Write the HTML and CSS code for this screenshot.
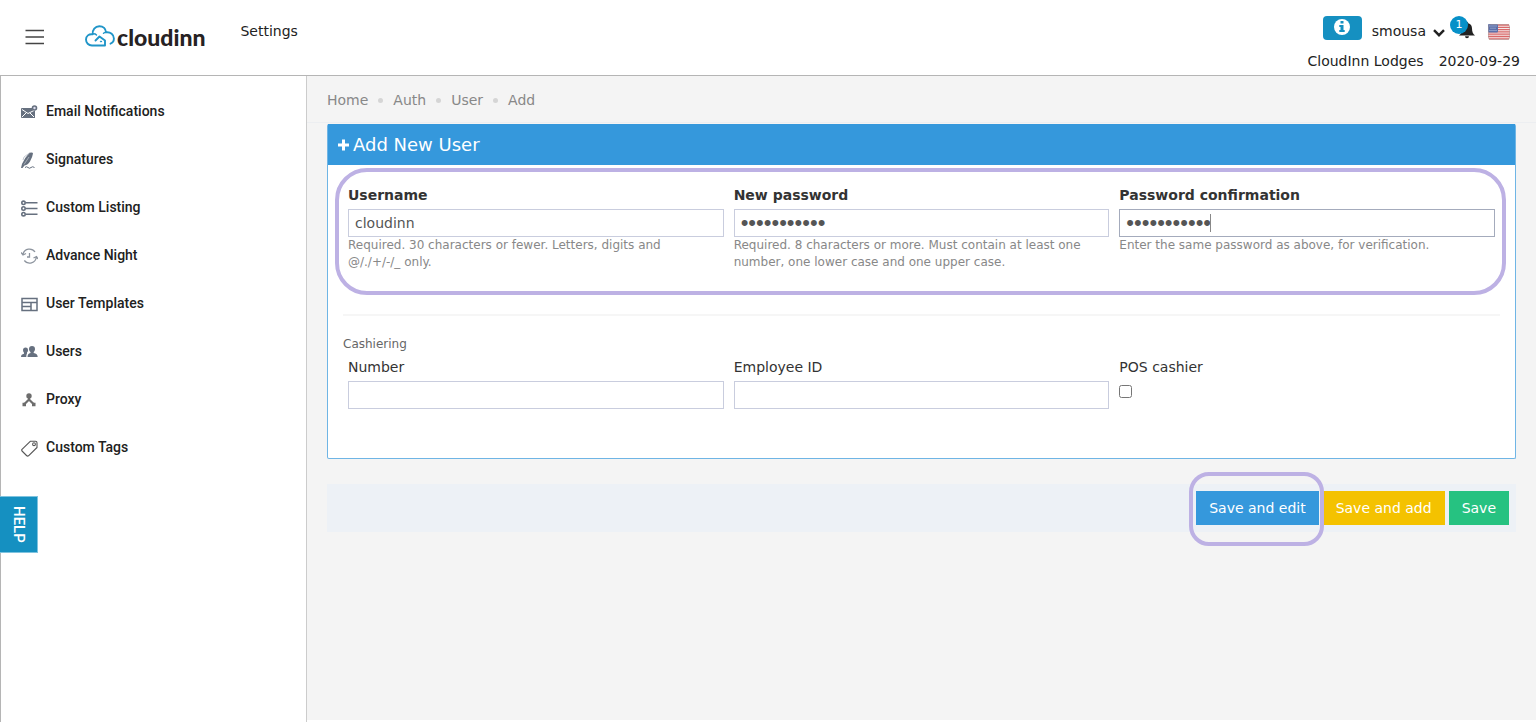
FILE: index.html
```html
<!DOCTYPE html>
<html lang="en">
<head>
<meta charset="utf-8">
<title>Add New User</title>
<meta name="viewport" content="width=device-width, initial-scale=1">
<link rel="stylesheet" href="styles.css">
</head>
<body>
<header class="topbar">
  <button class="menu-toggle" type="button" aria-label="Menu">
    <svg width="20" height="16" viewBox="0 0 20 16" stroke="#444" stroke-width="1.7"><path d="M.5 1.500h18.500M.5 8h18.500M.5 14.500h18.500"/></svg>
  </button>
  <a class="brand" href="#">
    <svg width="30" height="22" viewBox="0 0 30 22" fill="none" stroke="#2095c8" stroke-width="1.900" stroke-linecap="round" stroke-linejoin="round">
      <path d="M10.500 15.500L14.500 11.500L20 15.500V20.500H7C3.500 20.500 1 17.800 1 14.600C1 11 3.800 8.700 7.800 9.300C7 4.800 10.300 1.200 14.300 1.200C18.400 1.200 20.800 4 21 7.400C25.500 6.800 28.900 9.500 28.900 13.600C28.900 16 27.600 18 25.500 18.700"/>
      <path d="M8.500 8.800Q10.500 8.800 11.500 10M21 7.400Q19.500 7.400 18.500 8.300" stroke-width="1.400"/>
      <circle cx="16" cy="16.500" r=".6" fill="#2095c8" stroke-width="1"/>
    </svg>
    <span class="brand-name">cloudinn</span>
  </a>
  <a class="section-link" href="#">Settings</a>
  <div class="account">
    <div class="account-row">
      <button class="info-button" type="button" aria-label="Information">
        <svg width="18" height="18" viewBox="0 0 18 18"><circle cx="9" cy="9" r="8" fill="#fff"/><path fill="#1590c1" d="M7.500 3h3v2.500h-3zM6.300 7h4.200v5h1.200v2H6.300v-2h1.200V9H6.300z"/></svg>
      </button>
      <button class="user-menu" type="button">smousa
        <svg width="12" height="8" viewBox="0 0 12 8" fill="none" stroke="#222" stroke-width="2.400"><path d="M1 1.200l5 5 5-5"/></svg>
      </button>
      <button class="alerts" type="button" aria-label="1 notification">
        <svg width="16" height="17" viewBox="0 0 16 17" fill="#222"><path d="M8 0c.8 0 1.200.5 1.200 1.200C12 1.800 13 4 13 6.500c0 3.500 1 5.500 3 7H0c2-1.500 3-3.500 3-7C3 4 4 1.800 6.800 1.200 6.800.5 7.200 0 8 0zM6 14.200h4a2 2 0 0 1-4 0z"/></svg>
        <span class="alert-count">1</span>
      </button>
      <button class="flag" type="button" aria-label="English (US)">
        <svg width="22" height="16" viewBox="0 0 22 16"><rect width="22" height="16" rx="2" fill="#f5e9e8"/><path d="M1 1h20M0 3.300h22M0 5.600h22M0 7.900h22M0 10.200h22M0 12.500h22M1 14.900h20" stroke="#d9696a" stroke-width="1.300"/><rect width="10" height="8.500" rx="1" fill="#5c70aa"/><path d="M1.500 2h8M2.500 4.200h6M1.500 6.500h8" stroke="#bfc8e4" stroke-dasharray="1 1"/><rect x=".5" y=".5" width="21" height="15" rx="2" fill="none" stroke="#a99" stroke-opacity=".5"/></svg>
      </button>
    </div>
    <div class="property"><span>CloudInn Lodges</span><time datetime="2020-09-29">2020-09-29</time></div>
  </div>
</header>
<div class="shell">
  <nav class="sidebar">
    <a href="#"><svg width="17" height="14" viewBox="0 0 17 14"><path fill="#66707f" d="M1 3h10a3.500 3.500 0 0 0 3 3v7H1Q0 13 0 12V4Q0 3 1 3z"/><path d="M1 4.500l6 4 6-3M1 12l4-4M13 12L9 8" stroke="#fff" fill="none"/><circle cx="13.500" cy="3" r="2" fill="#dde" stroke="#66707f" stroke-width="1.600"/></svg>Email Notifications</a>
    <a href="#"><svg width="17" height="17" viewBox="0 0 17 17"><path fill="#66707f" d="M8.500.8Q12 0 12 1.500 11.500 5 9 9.500 7 13 3.500 13.500L1.500 16H0L1 12Q3.500 6 8.500.8z"/><path d="M8.500 1L3 5 2 8M3 12.500L8 5" fill="none" stroke="#b5bbc5" stroke-width=".8"/><path d="M4 15.500q1.500-1.500 3 0t3 0 3.500 0" fill="none" stroke="#66707f"/></svg>Signatures</a>
    <a href="#"><svg width="17" height="17" viewBox="0 0 17 17" fill="none" stroke="#66707f" stroke-width="1.600"><circle cx="2.500" cy="2.800" r="1.700"/><circle cx="2.500" cy="8.500" r="1.700"/><circle cx="2.500" cy="14.200" r="1.700"/><path d="M5 2.800h11.500M5 8.500h11.500M5 14.200h11.500"/></svg>Custom Listing</a>
    <a href="#"><svg width="17" height="16" viewBox="0 0 17 16" fill="none" stroke="#8d949e" stroke-width="1.300"><path d="M2 6a6.700 6.700 0 0 1 12-2M15.300 9a6.700 6.700 0 0 1-12 3.500M0 4.500L2 7l3-1.500M12.500 10l3-1.500L17 11M8.500 5v4H6"/></svg>Advance Night</a>
    <a href="#"><svg width="17" height="15" viewBox="0 0 17 15" fill="none" stroke="#66707f" stroke-width="1.500"><path d="M1 1.500h15v12H1zM1 5.500h15M1 9.500h9M10 5.500v8"/></svg>User Templates</a>
    <a href="#"><svg width="17" height="12" viewBox="0 0 17 12" fill="#66707f"><path d="M11 0c2 0 3 1.300 3 3 0 1.500-.6 2.400-1.300 3v1c2.500.7 4 1.500 4 4H6.500c0-2.500 1-3.300 3-4V6C8.700 5.400 8 4.500 8 3c0-1.700 1-3 3-3zM4.500 1.500C6 1.500 7 2.300 7 4c0 1-.3 2-1 2.500v1C5.500 8.500 5.300 9.500 5.300 11H0c0-2 1-2.700 3-3.300v-1C2.300 6 2 5 2 4c0-1.500 1-2.500 2.500-2.500z"/></svg>Users</a>
    <a href="#"><svg width="17" height="14" viewBox="0 0 17 14"><path d="M8 3v5M8 6.500l-5 5M8 6.500l5 5" fill="none" stroke="#6d6d6d" stroke-width="2.200"/><circle cx="8" cy="3" r="2.700" fill="#6d6d6d"/><path fill="#6d6d6d" d="M1.500 9.800h3.500v3.500H1.500zM11 9.800h3.500v3.500H11z"/></svg>Proxy</a>
    <a href="#"><svg width="17" height="17" viewBox="0 0 17 17" fill="none" stroke="#555" stroke-width="1.100" stroke-linejoin="round"><path d="M9.500 1.200H14.500Q16 1.200 16 2.700V7.500L7.500 15.800Q6.500 16.500 5.500 15.500L1 11Q.3 10 1 9.300z"/><circle cx="13" cy="4.200" r="1.400"/></svg>Custom Tags</a>
  </nav>
  <main class="content">
    <nav class="breadcrumb" aria-label="Breadcrumb">
      <a href="#">Home</a><i></i><a href="#">Auth</a><i></i><a href="#">User</a><i></i><span>Add</span>
    </nav>
    <form class="user-form">
      <section class="panel">
        <h1 class="panel-title"><svg width="11" height="12" viewBox="0 0 11 12" stroke="#fff" stroke-width="3"><path d="M5.500 .5v11M0 6h11"/></svg>Add New User</h1>
        <div class="panel-body">
          <div class="fields required-fields">
            <div class="field">
              <label class="strong" for="username">Username</label>
              <input id="username" type="text" value="cloudinn">
              <p>Required. 30 characters or fewer. Letters, digits and @/./+/-/_ only.</p>
            </div>
            <div class="field">
              <label class="strong" for="password">New password</label>
              <input id="password" type="password" value="cloudinn123">
              <p>Required. 8 characters or more. Must contain at least one number, one lower case and one upper case.</p>
            </div>
            <div class="field">
              <label class="strong" for="confirm">Password confirmation</label>
              <div class="active-field"><input id="confirm" type="password" value="cloudinn123"><span class="caret"></span></div>
              <p>Enter the same password as above, for verification.</p>
            </div>
          </div>
          <hr>
          <h2>Cashiering</h2>
          <div class="fields">
            <div class="field"><label for="number">Number</label><input id="number" type="text"></div>
            <div class="field"><label for="employee">Employee ID</label><input id="employee" type="text"></div>
            <div class="field"><label for="pos">POS cashier</label><input id="pos" type="checkbox"></div>
          </div>
        </div>
      </section>
      <div class="actions">
        <span class="marked"><button class="btn blue" type="button">Save and edit</button></span>
        <button class="btn yellow" type="button">Save and add</button>
        <button class="btn green" type="submit">Save</button>
      </div>
    </form>
  </main>
</div>
<button class="help-tab" type="button">HELP</button>
</body>
</html>
```
FILE: styles.css
```css
* { box-sizing: border-box; }
body {
  margin: 0;
  min-height: 100vh;
  display: flex;
  flex-direction: column;
  background: #fff;
  color: #333;
  font: 14px/20px "DejaVu Sans", Verdana, sans-serif;
}
a { color: inherit; text-decoration: none; }
button, input { font: inherit; color: inherit; }
button { border: 0; background: none; padding: 0; cursor: pointer; }
svg { display: block; flex: none; }

.topbar {
  display: flex;
  align-items: flex-start;
  min-height: 76px;
  padding: 0 16px 0 25px;
  border-bottom: 1px solid #b5b5b5;
  color: #222;
}
.menu-toggle { margin-top: 29px; }
.brand { display: flex; gap: 2px; margin: 25px 35px 0 40px; }
.brand-name { font: 900 23px/24px Lato, sans-serif; color: #262223; }
.section-link { margin-top: 21px; }
.account { margin-left: auto; }
.account-row { display: flex; justify-content: flex-end; align-items: flex-start; padding: 16px 10px 0 0; }
.info-button {
  display: grid;
  place-items: center;
  width: 39px;
  height: 24px;
  padding-bottom: 2px;
  border-radius: 4px;
  background: #1590c1;
}
.user-menu { display: flex; align-items: center; gap: 7px; margin: 5px 14px 0 10px; }
.user-menu svg { margin-top: 3px; }
.alerts { position: relative; margin-top: 6px; }
.alert-count {
  position: absolute;
  right: 7px;
  top: -6px;
  width: 18px;
  height: 18px;
  border-radius: 50%;
  background: #0790c8;
  color: #fff;
  font-size: 11px;
  line-height: 18px;
}
.flag { margin: 8px 0 0 13px; }
.property { display: flex; justify-content: flex-end; gap: 15px; margin-top: 10px; }

.shell { flex: 1; display: flex; }
.sidebar {
  flex: none;
  width: 307px;
  padding-top: 11px;
  border: solid #b5b5b5;
  border-width: 0 1px;
  border-right-color: #ccc;
  color: #212121;
  font: 500 14px/20px Roboto, sans-serif;
}
.sidebar a { display: flex; align-items: center; gap: 8px; height: 48px; padding: 0 20px; }
.sidebar svg { margin-top: 2px; }

.content { flex: 1; min-width: 0; margin-bottom: 2px; background: #f4f4f4; }
.breadcrumb {
  display: flex;
  align-items: center;
  gap: 10px;
  padding: 14px 20px 12px;
  border-bottom: 1px solid #eceef1;
  color: #888;
}
.breadcrumb i { width: 5px; height: 5px; border-radius: 50%; background: #d5d5d5; }
.user-form { padding: 1px 20px 0; }
.panel { border: 1px solid #6fb5e5; border-top: 0; border-radius: 2px; background: #fff; }
.panel-title {
  display: flex;
  align-items: center;
  gap: 4px;
  margin: 0;
  padding: 9px 10px 8px;
  background: #3598dc;
  color: #fff;
  font-size: 18px;
  font-weight: 400;
  line-height: 24px;
}
.panel-body { padding: 20px 15px 50px; }
.fields { display: grid; grid-template-columns: repeat(3, 1fr); gap: 10px; padding: 0 5px; }
.required-fields { position: relative; min-height: 85px; }
.required-fields::after {
  content: "";
  position: absolute;
  inset: -17px -6px -24px -8px;
  border: 4px solid #bdb1e4;
  border-radius: 32px;
  pointer-events: none;
}
.field label { display: block; margin-bottom: 4px; }
.field .strong { font-weight: 700; }
.field input:not([type="checkbox"]) {
  display: block;
  width: 100%;
  height: 28px;
  padding: 0 6px;
  border: 1px solid #c9cdde;
  border-radius: 0;
  background: #fff;
  color: #555;
  outline: 0;
}
.field input[type="password"] { font-family: "Liberation Sans", Arial, sans-serif; font-size: 22px; }
.field input[type="checkbox"] { display: block; width: 13px; height: 13px; margin: 8px 0 0; }
.field .active-field { position: relative; }
.field .active-field input:not([type="checkbox"]) { border-color: #a4abbc; }
.caret { position: absolute; left: 91px; top: 5px; width: 1px; height: 18px; background: #888; }
.field p { max-width: 360px; margin: 0; color: #888; font-size: 12px; line-height: 17px; }
hr { height: 2px; margin: 43px 0 0; border: 0; background: #f6f6f6; }
h2 { margin: 20px 0 5px; color: #666; font-size: 12px; font-weight: 400; line-height: 16px; }

.actions {
  display: flex;
  justify-content: flex-end;
  gap: 4px;
  margin-top: 25px;
  padding: 7px;
  background: #edf1f6;
}
.panel-body { padding-bottom: 49px; }
.btn { height: 34px; padding: 0 13px; color: #fff; }
.blue { background: #3598dc; }
.yellow { background: #f4c200; }
.green { background: #26c281; }
.marked { position: relative; }
.marked::after {
  content: "";
  position: absolute;
  inset: -19px -5px -21px -7px;
  border: 4px solid #bdb1e4;
  border-radius: 20px;
  pointer-events: none;
}

.help-tab {
  position: fixed;
  left: 0;
  top: 496px;
  width: 38px;
  height: 57px;
  border: 1px solid #7fc3df;
  border-left: 0;
  background: #1590c1;
  color: #fff;
  font: 500 15px/20px Roboto, sans-serif;
  writing-mode: vertical-rl;
}
```
